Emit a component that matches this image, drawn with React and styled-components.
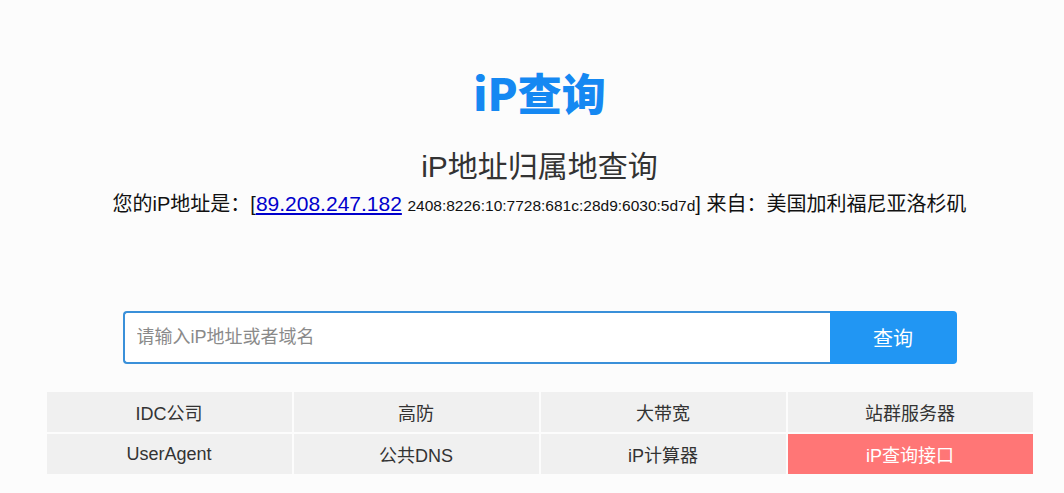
import React from "react";
import styled, { createGlobalStyle } from "styled-components";

const Global = createGlobalStyle`
  html, body { margin: 0; padding: 0; background: #fcfcfc; }
  body { font-family: "Liberation Sans", Arial, "Noto Sans CJK SC", sans-serif; }
  #root { padding-left: 15px; }
`;

const Page = styled.div`
  display: flex;
  flex-direction: column;
  align-items: center;
  padding-top: 64px;
`;

const Logo = styled.h1`
  margin: 0;
  font-family: "Noto Sans CJK SC", sans-serif;
  font-weight: 900;
  font-size: 44px;
  line-height: 56px;
  color: #1588f2;
`;

const Subtitle = styled.h2`
  margin: 29px 0 0;
  font-family: "Liberation Sans", Arial, "Noto Sans CJK SC", sans-serif;
  font-weight: 400;
  font-size: 30px;
  line-height: 36px;
  color: #333;
`;

const Info = styled.p`
  margin: 6px 0 0;
  font-size: 20px;
  line-height: 26px;
  color: #111;
  white-space: nowrap;
`;

const IpLink = styled.a`
  font-size: 21px;
  color: #0000cc;
  text-decoration: underline;
`;

const Small = styled.span`
  font-size: 15.5px;
`;

const SearchForm = styled.form`
  margin-top: 92px;
  width: 834px;
  height: 53px;
  display: flex;
`;

const SearchInput = styled.input`
  flex: 1;
  min-width: 0;
  box-sizing: border-box;
  height: 100%;
  border: 2px solid #3a90d9;
  border-right: none;
  border-radius: 4px 0 0 4px;
  padding: 0 12px;
  font-family: "Liberation Sans", Arial, "Noto Sans CJK SC", sans-serif;
  font-size: 18px;
  background: #fff;
  outline: none;
  &::placeholder { color: #8a8a8a; }
`;

const SearchButton = styled.button`
  width: 127px;
  height: 100%;
  border: none;
  border-radius: 0 4px 4px 0;
  background: #2196f3;
  color: #fff;
  font-family: "Liberation Sans", Arial, "Noto Sans CJK SC", sans-serif;
  font-size: 20px;
  cursor: pointer;
`;

const Grid = styled.nav`
  margin-top: 28px;
  width: 986px;
  display: grid;
  grid-template-columns: repeat(4, 1fr);
  grid-auto-rows: 40px;
  gap: 2px;
`;

const Cell = styled.a`
  display: flex;
  align-items: center;
  justify-content: center;
  background: ${(p) => (p.$hot ? "#ff7676" : "#f0f0f0")};
  color: ${(p) => (p.$hot ? "#fff" : "#333")};
  font-size: 18px;
  text-decoration: none;
`;

const links = [
  ["IDC公司"],
  ["高防"],
  ["大带宽"],
  ["站群服务器"],
  ["UserAgent"],
  ["公共DNS"],
  ["iP计算器"],
  ["iP查询接口", true],
];

export default function App() {
  return (
    <>
      <Global />
      <Page>
        <Logo>iP查询</Logo>
        <Subtitle>iP地址归属地查询</Subtitle>
        <Info>
          您的iP地址是：[<IpLink href="#">89.208.247.182</IpLink>{" "}
          <Small>2408:8226:10:7728:681c:28d9:6030:5d7d</Small>] 来自：美国加利福尼亚洛杉矶
        </Info>
        <SearchForm onSubmit={(e) => e.preventDefault()}>
          <SearchInput placeholder="请输入iP地址或者域名" />
          <SearchButton type="submit">查询</SearchButton>
        </SearchForm>
        <Grid>
          {links.map(([t, hot]) => (
            <Cell key={t} href="#" $hot={hot}>
              {t}
            </Cell>
          ))}
        </Grid>
      </Page>
    </>
  );
}
